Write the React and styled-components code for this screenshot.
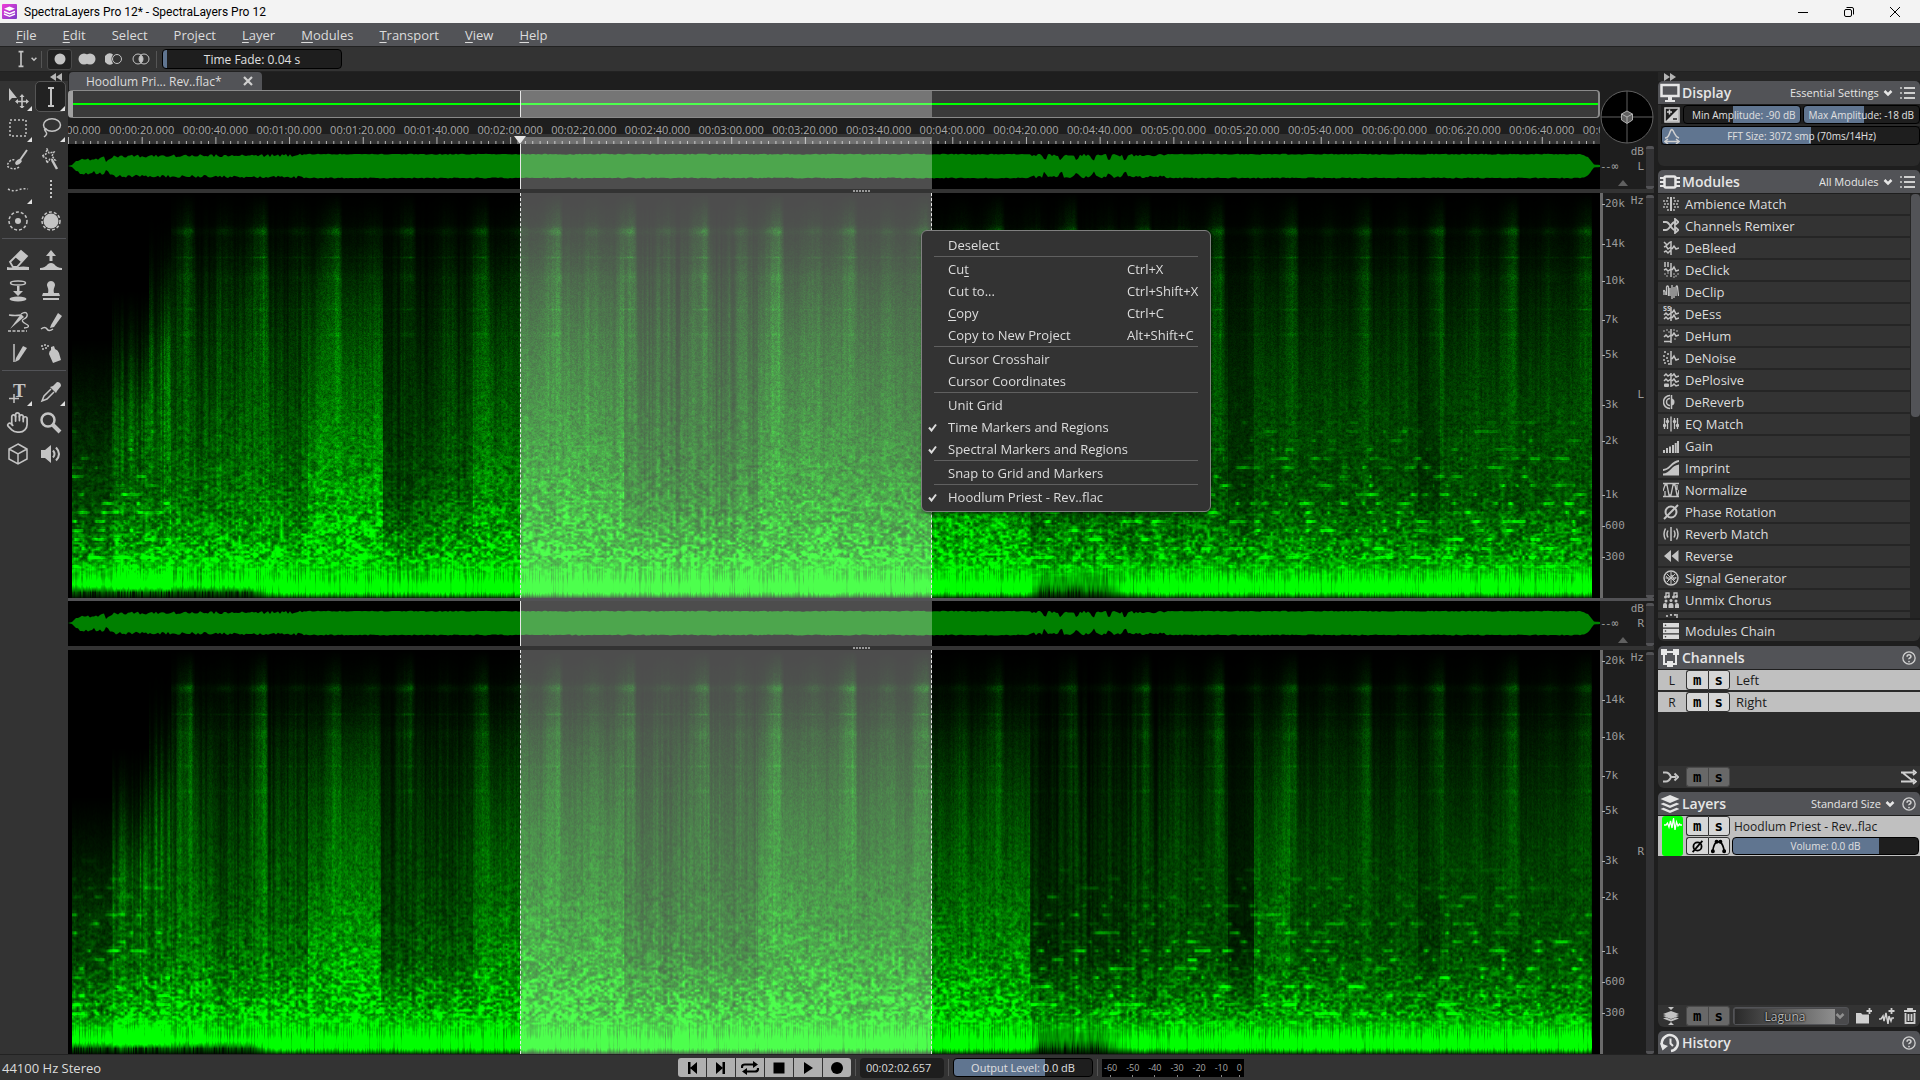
import React, { useLayoutEffect, useRef } from 'react';
import styled, { createGlobalStyle, css } from 'styled-components';
import { Hand } from 'lucide-react';

const UI_FONT = '"Open Sans", "Noto Sans", sans-serif';
const MONO_FONT = '"DejaVu Sans Mono", "Liberation Mono", monospace';

const GlobalStyle = createGlobalStyle`
  *, *::before, *::after { box-sizing: border-box; }
  body {
    margin: 0;
    background: #1e1e1e;
    color: #dcdcdc;
    font-family: ${UI_FONT};
    font-size: 13px;
    overflow: hidden;
  }
  button, input, select { font: inherit; color: inherit; }
  svg { display: block; flex: none; }
`;

/* ---------- data ---------- */

const menuList = [
  ['', 'F', 'ile'], ['', 'E', 'dit'], ['Select', '', ''], ['Pro', 'j', 'ect'], ['', 'L', 'ayer'],
  ['', 'M', 'odules'], ['', 'T', 'ransport'], ['', 'V', 'iew'], ['', 'H', 'elp'],
];

const contextGroups = [
  [{ label: 'Deselect' }],
  [
    { label: <>Cu<u>t</u></>, keys: 'Ctrl+X' },
    { label: 'Cut to...', keys: 'Ctrl+Shift+X' },
    { label: <><u>C</u>opy</>, keys: 'Ctrl+C' },
    { label: 'Copy to New Project', keys: 'Alt+Shift+C' },
  ],
  [{ label: 'Cursor Crosshair' }, { label: 'Cursor Coordinates' }],
  [
    { label: 'Unit Grid' },
    { label: 'Time Markers and Regions', checked: true },
    { label: 'Spectral Markers and Regions', checked: true },
  ],
  [{ label: 'Snap to Grid and Markers' }],
  [{ label: 'Hoodlum Priest - Rev..flac', checked: true }],
];

// span = share of the axis height down to the next mark
const freqMarks = [
  { label: '20k', span: 40 }, { label: '14k', span: 37 }, { label: '10k', span: 39 },
  { label: '7k', span: 35 }, { label: '5k', span: 50 }, { label: '3k', span: 36 },
  { label: '2k', span: 54 }, { label: '1k', span: 31 }, { label: '600', span: 31 },
  { label: '300', span: 49 },
];

const VISIBLE_STEPS = 20.79;
const SELECTION = { left: 29.5, width: 26.9 };

const timeMarks = Array.from({ length: 22 }, (_, i) => {
  const s = i * 20;
  const pad = (n) => String(n).padStart(2, '0');
  return `00:${pad(Math.floor(s / 60))}:${pad(s % 60)}.000`;
});

const meterMarks = ['-60', '-50', '-40', '-30', '-20', '-10', '0'];

/* ---------- icons ---------- */

const Svg = ({ size = 16, box = 16, h, children, ...rest }) => (
  <svg width={size} height={h || size} viewBox={`0 0 ${box} ${h ? (box * h) / size : box}`} fill="none"
    stroke="currentColor" strokeWidth="1.5" aria-hidden="true" {...rest}>
    {children}
  </svg>
);
const F = { fill: 'currentColor', stroke: 'none' };

const dots = (list, r = 0.8) => list.map(([x, y]) => <circle key={`${x}-${y}`} cx={x} cy={y} r={r} {...F} />);

const moduleList = [
  ['Ambience Match', <><path d="M8 1v14" strokeWidth="2" />{dots([[5, 2], [4, 5], [1, 5], [5, 8], [2, 8], [1, 11], [4, 11], [5, 14], [11, 2], [12, 5], [15, 5], [11, 8], [14, 8], [15, 11], [12, 11], [11, 14]], 0.9)}</>],
  ['Channels Remixer', <path d="M0 4h3c4 0 5 8 9 8h1M0 12h3c4 0 5-8 9-8h1M12 1l3.5 3L12 7zM12 9l3.500 3L12 15z" strokeWidth="1.8" />],
  ['DeBleed', <path d="M8 1v14M1 2l3 3 3-3M1 7l2-1 2 3 3-2M1 12l2-1 2 2 3-3M9 9l2-3 2 3 3-1" />],
  ['DeClick', <><path d="M2 0v5M5 0v5M8 1v14M1 8l2-1 2 2 3-2M9 8l2-3 2 4 3-1" />{dots([[2, 12], [5, 11], [4, 14], [11, 12], [13, 14], [15, 12], [11, 15]])}</>],
  ['DeClip', <path d="M0 11V8q1-3 2 0v3M3.500 11V3q1-2 2 0v9M7 12V4M9 1v14M11 3v11M13 12V3q1-2 1.500 0L15.500 12" strokeWidth="1.300" />],
  ['DeEss', <><text x="0" y="5" fontSize="8" fontWeight="700" {...F}>ss</text><path d="M8 1v14M1 9l2-2 2 2 3-2M1 13l2-2 2 2 3-2M9 7l2-3 2 4 3-1M9 12l2-3 2 4 3-1" /></>],
  ['DeHum', <><path d="M8 1v14M1 9l2-2 2 2 3-2M1 13.500h7M9 8l2-3 2 3 3-1" />{dots([[1, 3], [4, 2], [6, 4], [11, 2], [14, 3], [12, 11]])}</>],
  ['DeNoise', <><path d="M8 1v14M9 9l2-3 2 4 3-1" />{dots([[2, 2], [5, 4], [1, 6], [4, 8], [1, 10], [5, 11], [2, 13], [6, 14]], 1)}</>],
  ['DePlosive', <><path d="M8 1v14M1 4l2-2 2 2 3-2M1 9l2-2 2 2 3-2M9 4l2-2 2 3 3-1M9 9l2-2 2 3 3-1M9 14l2-2 2 2 3-1" /><rect x="1" y="11.500" width="5" height="3.500" rx="1" {...F} /></>],
  ['DeReverb', <><path d="M7 1.500a6.500 6.500 0 0 0 0 13M7 4.500a3.500 3.500 0 0 0 0 7M8.500 1v14" /><path d="M8 4.500a3.500 3.500 0 0 1 0 7z" {...F} /></>],
  ['EQ Match', <><path d="M8 0.500v15M1.500 2v11M4.500 2v11M11.500 2v11M14.500 2v11" strokeWidth="1.300" />{dots([[1.500, 9.500], [4.500, 5.500], [11.500, 5.500], [14.500, 9.500]], 1.700)}</>],
  ['Gain', <path d="M0 12h2v3h-2zM3 10h2v5h-2zM6 8.500h2v6.500h-2zM9 7h2v8h-2zM11.700 5h2v10h-2zM14 3h2v12h-2z" {...F} />],
  ['Imprint', <><path d="M0 15.500v-2c7 0 8-8 16-9v11z" {...F} /><path d="M0 10c7 0 8-8 16-9" strokeWidth="1.800" /></>],
  ['Normalize', <path d="M0 1.500h16M0 14.500h16M0 9l2-6h2l2 10h2l2-10h2l2 10h1l1-5M2 9v5M14 3v5" strokeWidth="1.300" />],
  ['Phase Rotation', <><circle cx="8" cy="8" r="5.500" strokeWidth="2" /><path d="M1 15L15 1" strokeWidth="2" /></>],
  ['Reverb Match', <path d="M8 1v14M5 4.500q-2 3.500 0 7M2.500 2.500q-3 5.500 0 11M11 4.500q2 3.500 0 7M13.500 2.500q3 5.500 0 11" />],
  ['Reverse', <path d="M8 2v12L1 8zM15.500 2v12L8.500 8z" {...F} />],
  ['Signal Generator', <><circle cx="8" cy="8" r="7" /><path d="M8 2v12M2.500 8h11M4 4l8 8M12 4l-8 8" strokeWidth="1" /><path d="M3 6l3 4 3-5 2 5 2-3" strokeWidth="1" /></>],
  ['Unmix Chorus', <><path d="M3 5V1h3v3M11 5V1h3v3" strokeWidth="1.300" /><path d="M0 16v-3q0-2 2-2t2 2v3zM5.500 16v-3q0-2 2.500-2t2.500 2v3zM12 16v-3q0-2 2-2t2 2v3z" {...F} />{dots([[2.500, 5], [5.500, 4.500], [10.500, 5], [13.500, 4.500], [3, 9], [8, 8.500], [13, 9]], 1.500)}</>],
  ['Unmix Components', <>{dots([[4, 2], [8, 1], [12, 1]], 1.100)}<path d="M14 0v14" /></>],
];

const Chevron = () => <Svg size={10} box={10} strokeWidth="2.500"><path d="M1.500 3L5 6.500 8.500 3" /></Svg>;
const ListIcon = () => (
  <Svg size={16} strokeWidth="2"><path d="M4 3h11M4 8h11M4 13h11" />{dots([[1, 3], [1, 8], [1, 13]], 1)}</Svg>
);
const HelpIcon = () => (
  <Svg size={14}><circle cx="8" cy="8" r="7" /><path d="M5.800 6.500q0-2.200 2.200-2.200t2.200 2q0 1-1.200 1.700t-1 1.500" strokeWidth="1.800" /><circle cx="8" cy="12" r="1" {...F} /></Svg>
);
const PhaseIcon = () => <Svg size={13} strokeWidth="2.200"><circle cx="8" cy="8" r="5" /><path d="M2 15L14 1" /></Svg>;
const NodesIcon = () => (
  <Svg size={15} strokeWidth="1.800"><path d="M2 12C3 5 5 4 6 3h4c2 2 3 4 4 9" />{dots([[2, 13], [6, 3], [10, 3], [14, 13]], 2.100)}</Svg>
);

const headIcons = {
  display: <><path d="M1.500 2h17v11h-17z" strokeWidth="2.500" /><path d="M8 14h4v3h3v2H5v-2h3z" {...F} /></>,
  modules: <><rect x="4.500" y="4.500" width="11" height="11" rx="1.500" strokeWidth="2.500" /><path d="M0 6h4M0 10h4M0 14h4M16 6h4M16 10h4M16 14h4" strokeWidth="2" /></>,
  channels: <><path d="M4 4h12M4 4v12h12V4" strokeWidth="2" /><path d="M1 1h6v6H1zM13 1h6v6h-6zM7 13h6v6H7z" {...F} /></>,
  layers: <path d="M10 1l9.500 4L10 9 0.500 5zM0.500 10l3-1.300L10 11.500l6.500-2.800 3 1.300L10 14zM0.500 15l3-1.300L10 16.500l6.500-2.800 3 1.300L10 19z" {...F} />,
  history: <><path d="M3.500 15A8 8 0 1 1 11 18" strokeWidth="2.500" /><path d="M0 10l2.500 7.500L8 13z" {...F} /><path d="M10.500 5.500v5l2.500 2.500" strokeWidth="2" /></>,
};

const ibeam = <path d="M8 2h6M8 20h6M11 2v18" strokeWidth="2" />;

const toolGroups = [
  [
    { name: 'Move', more: true, art: <><path d="M2 2v13l3-3h5z" {...F} /><path d="M15 10v11M9.500 15.500h11" strokeWidth="1.600" /><path d="M15 8l2.500 3h-5zM15 23l2.500-3h-5zM8 15.500l3-2.500v5zM22 15.500l-3-2.500v5z" {...F} /></> },
    { name: 'Time Selection', more: true, active: true, art: ibeam },
    { name: 'Rectangular Selection', more: true, art: <path d="M3 3h16v16H3z" strokeDasharray="2 2" /> },
    { name: 'Lasso', more: true, art: <><ellipse cx="12" cy="8" rx="8.500" ry="6.200" /><path d="M6 12q-2 1 0 3t-2 5M4 13l3-1" /></> },
    { name: 'Brush Selection', art: <><path d="M13 12L20 2" strokeWidth="2" /><path d="M8 15q2-4 5-4l2 2q-2 4-6 4z" {...F} /><path d="M12 19q-4 3-9 1t0-7q2-2 5-1" strokeDasharray="2 1.500" /></> },
    { name: 'Magic Wand', art: <><path d="M7 1l2 4 5-1-2 4 3 4-5-1-3 4-1-5-4-2 4-2z" strokeDasharray="2 1" /><path d="M12 12l5 9" strokeWidth="2.500" /></> },
    { name: 'Harmonics', more: true, art: <path d="M1 10q5 3 10 1t10-1" strokeDasharray="2 2" /> },
    { name: 'Frequency', art: <path d="M11 1v20" strokeWidth="2" strokeDasharray="2 2" /> },
    { name: 'Area', art: <><circle cx="11" cy="11" r="9" strokeDasharray="3 2" /><circle cx="11" cy="11" r="3" {...F} /></> },
    { name: 'Blob', art: <><circle cx="11" cy="11" r="9" strokeDasharray="3 2" /><circle cx="11" cy="11" r="7.500" {...F} /></> },
  ],
  [
    { name: 'Eraser', art: <><path d="M3 13L14 2l6 5-10 11H6z" strokeWidth="1.800" /><path d="M8 8l6-6 6 5-6 6z" {...F} /><path d="M0 18q6 1 11 0t11 0v3H0z" {...F} /></> },
    { name: 'Amplify', art: <><path d="M11 1l5 6h-3.500v5h-3V7H6zM0 21v-2q5 0 8-4 3-2 6 0 3 4 8 4v2z" {...F} /></> },
    { name: 'Attenuate', art: <><ellipse cx="11" cy="3" rx="7.500" ry="2" /><path d="M10 6h2.500v5H16l-5 5-5-5h4z" {...F} /><ellipse cx="11" cy="19" rx="8.500" ry="2.500" {...F} /></> },
    { name: 'Clone Stamp', art: <path d="M11 1a4 4 0 0 1 3.500 6c-1 2-1 4-.5 6h5l1 3H2l1-3h5c.5-2 .5-4-.5-6A4 4 0 0 1 11 1zM3 18h16v2H3z" {...F} /> },
    { name: 'Heal', art: <><path d="M2 4q6 1 12 0" strokeWidth="1.500" /><path d="M3 18L14 3l3 3z" {...F} /><path d="M14 3q5-3 6 0t-3 5 2 5-2 4" strokeWidth="1.300" /><path d="M1 20h19" strokeDasharray="3 1.500" /></> },
    { name: 'Draw', art: <><path d="M11 14l7-12 4 3-8 11-4 1z" {...F} /><path d="M1 18q4-3 6 0t6 0" /></> },
    { name: 'Pencil', art: <><path d="M7 2v18" /><path d="M9 16l7-12 4 2-8 12-4 2z" {...F} /></> },
    { name: 'Spray', art: <><path d="M11 5l3-1 1 3q3 1 4 4l2 7-8 3-4-9q0-3 2-4z" {...F} />{dots([[2, 4], [5, 3], [8, 4], [3, 7], [6, 6]], 1)}</> },
  ],
  [
    { name: 'Text', more: true, art: <><text x="6" y="16" fontSize="19" fontWeight="700" fontFamily='"Liberation Serif", serif' {...F}>T</text><path d="M7 13v9M2 17.500h10" /></> },
    { name: 'Color Picker', more: true, art: <><path d="M13 5l4-4q4 0 4 4l-4 5-1 2-6-6z" {...F} /><path d="M11 8L4 15l-2 5 5-2 7-7" strokeWidth="1.500" /></> },
    { name: 'Pan', art: null },
    { name: 'Zoom', art: <><circle cx="8" cy="8" r="6.500" strokeWidth="2.500" /><path d="M13 13l7 7" strokeWidth="4" /></> },
    { name: '3D View', art: <path d="M11 1l9 5v10l-9 5-9-5V6zM2 6l9 5 9-5M11 11v10" /> },
    { name: 'Playback', art: <><path d="M1 7h4l6-5v18l-6-5H1z" {...F} /><path d="M13 7.500q3 3.500 0 7M16 4.500q6 6.500 0 13" strokeWidth="2" /></> },
  ],
];

/* ---------- spectrogram / waveform drawing ---------- */

const mulberry = (seed) => () => {
  seed = (seed + 0x6d2b79f5) | 0;
  let t = Math.imul(seed ^ (seed >>> 15), 1 | seed);
  t = (t + Math.imul(t ^ (t >>> 7), 61 | t)) ^ t;
  return ((t ^ (t >>> 14)) >>> 0) / 4294967296;
};

const clamp = (n) => Math.max(0, Math.min(1, n));

const lerpTable = (table, x) => {
  for (let i = 1; i < table.length; i += 1) {
    if (x <= table[i][0]) {
      const [x0, y0] = table[i - 1];
      const [x1, y1] = table[i];
      return y0 + ((y1 - y0) * (x - x0)) / (x1 - x0 || 1);
    }
  }
  return table[table.length - 1][1];
};

const stepTable = (table, x) => {
  let out = table[0][1];
  table.forEach(([from, level]) => { if (x >= from) out = level; });
  return out;
};

const smoothNoise = (rand) => {
  const size = 512;
  const cells = Float32Array.from({ length: size * size }, () => rand());
  return (x, y) => {
    const xi = Math.floor(x);
    const yi = Math.floor(y);
    const fx = x - xi;
    const fy = y - yi;
    const at = (a, b) => cells[(b & 511) * size + (a & 511)];
    const top = at(xi, yi) + (at(xi + 1, yi) - at(xi, yi)) * fx;
    const low = at(xi, yi + 1) + (at(xi + 1, yi + 1) - at(xi, yi + 1)) * fx;
    return top + (low - top) * fy;
  };
};

const profile = [
  [0, 0], [0.03, 0.005], [0.08, 0.025], [0.16, 0.09], [0.25, 0.18], [0.4, 0.28], [0.55, 0.35],
  [0.68, 0.42], [0.78, 0.49], [0.86, 0.6], [0.92, 0.74], [0.95, 0.88], [0.965, 1.15], [0.982, 1.15], [0.992, 0.6], [1, 0.1],
];
const levels = {
  L: [[0, 0], [4, 0.6], [44, 0.75], [81, 0.8], [102, 0.85], [240, 1.25], [315, 0.55], [345, 0.7], [405, 1.05], [452, 1.2], [556, 0.8], [690, 1.15], [752, 1.05], [882, 1.05], [962, 0.65], [1020, 0.75], [1100, 0.8], [1160, 0.5], [1186, 0.75], [1350, 0.5], [1372, 0.8], [1524, 0]],
  R: [[0, 0], [4, 0.6], [44, 0.75], [81, 0.8], [102, 0.85], [240, 1.2], [313, 0.55], [345, 0.7], [405, 1.05], [452, 1.2], [556, 0.8], [690, 1.15], [752, 1.05], [882, 1.05], [962, 0.5], [1010, 0.5], [1060, 0.7], [1160, 0.3], [1186, 1], [1222, 0.75], [1350, 0.55], [1372, 0.75], [1524, 0]],
};
// how far down the sound reaches before it becomes audible, as a share of the height
const ceilings = [[0, 0.36], [44, 0.24], [81, 0.04], [102, 0]];
const partials = [[38, 0.15, 4], [64, 0.13, 1], [84, 0.06, 5], [116, 0.1, 1], [141, 0.07, 2]];

const drawSpectrogram = (canvas, channel) => {
  const w = canvas.clientWidth;
  const h = canvas.clientHeight;
  canvas.width = w;
  canvas.height = h;
  const ctx = canvas.getContext('2d');
  const img = ctx.createImageData(w, h);
  const rand = mulberry(channel === 'L' ? 11 : 12);
  const noise = smoothNoise(rand);

  for (let x = 0; x < w; x += 1) {
    const t = (x / w) * 1532;
    const level = stepTable(levels[channel], t);
    const ceiling = stepTable(ceilings, t);
    const phase = (t - 127 + 736) / 73.6;
    const beat = phase % 1;
    const strength = 0.75 + 0.5 * noise(Math.floor(phase) * 3.100, 410);
    const peak = beat > 0.94 ? (1 - beat) / 0.06 : Math.exp(-Math.pow((beat - 0.94) * 6, 2));
    const offbeat = Math.exp(-Math.pow((beat - 0.4) * 9, 2));
    const glow = strength * (peak + 0.3 * offbeat);
    const striped = (t > 100 && t < 240) || (t > 320 && t < 400) || (t > 556 && t < 690) || (t > 962 && t < 1120);
    const ripple = noise(t / 1.6, 300) - 0.5;
    const swell = noise(t / 7, 320) - 0.5;
    const column = 1 + ripple * (striped ? 1.1 : 0.5) + swell * (striped ? 0.6 : 0.3);
    const bars = channel === 'R' && t > 962 && t < 1090 ? 0.35 + 0.7 * Math.abs(Math.sin(t / 2.600)) : 1;
    const fine = rand();
    const weakBass = clamp((205 - t) / 25) + clamp((t - 960) / 12) * clamp((1070 - t) / 40);

    for (let y = 0; y < h; y += 1) {
      const v = y / h;
      const base = lerpTable(profile, v);
      const lowMix = clamp((v - 0.74) / 0.2);
      const lev = level === 0 ? 0 : level + (1 - level) * lowMix;
      const colMix = clamp(1.1 - v * 0.95);
      let g = base * lev * (1 + (column * bars - 1) * colMix);

      if (t > 102 && level) {
        // drum hits light up the treble
        const reach = clamp((0.75 - v) / 0.55);
        g = g * (1 + (0.3 * glow - 0.2) * reach) + glow * 0.13 * clamp(v * 9) * reach * (0.7 + column * 0.3);
        partials.forEach(([py, amount, spread]) => {
          const d = Math.abs(y - py);
          if (d <= spread * 2) g += amount * Math.exp(-(d * d) / (spread * spread)) * (0.15 + glow);
        });
      } else {
        g *= clamp((v - ceiling) * 3);
        if (t > 44) g *= 1 + 0.25 * clamp((v - 0.3) / 0.2) + ripple * clamp((0.9 - v) * 2);
      }

      const grain = rand();
      const cells = noise(x / 1.5, y / 1.4 + 40);
      const blobs = noise(x / 3, y / 2.200 + 200);
      const k = clamp((v - 0.35) / 0.5);
      const bass = clamp((v - 0.9) / 0.05);
      const treble = 0.65 + grain * 0.4 + cells * 0.3;
      const mid = 0.4 + grain * 0.25 + cells * 0.5 + blobs * 0.5;
      const low = 0.38 + grain * 0.1 + Math.pow(blobs, 1.500) * 1.300 + cells * 0.35;
      const texture = k < 0.5 ? treble + (mid - treble) * k * 2 : mid + (low - mid) * (k * 2 - 1);
      const streaks = 0.6 + fine * 0.5 + noise(x / 1.5, y / 9) * 0.35;
      g *= texture + (streaks - texture) * bass;

      // sustained notes show as short dashes on a few lines
      const noteArea = clamp((v - 0.5) / 0.25) * clamp((0.95 - v) / 0.04);
      if (noteArea && level && (t > 962 || t < 102)) {
        g *= 1 - 0.22 * noteArea;
        const line = Math.abs((y % 9) - 4) < 2 ? 1 : 0.15;
        const note = noise(x / 7, Math.floor(y / 9) * 7 + 90);
        if (note > 0.62) g += (note - 0.62) * 1.700 * noteArea * line;
      }
      if (v > 0.92) {
        const fade = t < 400 ? clamp((v - 0.965) / 0.02) : clamp((v - 0.925) / 0.06);
        g *= 1 - clamp(weakBass) * fade * (0.5 + 0.45 * fine);
      }

      const i = (y * w + x) * 4;
      img.data[i] = 0;
      img.data[i + 1] = Math.max(0, Math.min(255, g * 265));
      img.data[i + 2] = 0;
      img.data[i + 3] = 255;
    }
  }
  ctx.putImageData(img, 0, 0);
};

const envelope = [[0, 0], [4, 1], [10, 7], [16, 9], [24, 7], [36, 10], [38, 6], [46, 11], [150, 11.5], [240, 12], [1515, 12], [1520, 9], [1526, 1.5], [1532, 1]];
const wavePath = (() => {
  const rand = mulberry(5);
  const up = [];
  const down = [];
  for (let x = 0; x <= 1532; x += 2) {
    const e = lerpTable(envelope, x);
    const rough = x < 235 || (x > 958 && x < 1100) ? 3 : 1;
    const dip = (x > 962 && x < 1060 && x % 16 < 4) ? 4 : 0;
    const k = e > 5 ? 1 : 0;
    up.push(`${x} ${(22 - e + k * (rand() * rough - 0.3 + dip)).toFixed(1)}`);
    down.push(`${x} ${(22 + e - k * (rand() * rough - 0.5 + dip)).toFixed(1)}`);
  }
  return `M${up.join('L')}L${down.reverse().join('L')}Z`;
})();

/* ---------- small shared parts ---------- */

const Slider = ({ label, value, from = 0, text, shift, ...rest }) => (
  <SliderBox {...rest}>
    <SliderInput type="range" min="0" max="100" defaultValue={value} aria-label={label} $from={from} $to={value} />
    <SliderText $shift={shift}>{text}</SliderText>
  </SliderBox>
);

const MuteSolo = ({ dim }) => (
  <ButtonPair>
    <MiniButton $dim={dim} aria-label="Mute">m</MiniButton>
    <MiniButton $dim={dim} aria-label="Solo">s</MiniButton>
  </ButtonPair>
);

const PanelHeader = ({ icon, title, select, end, last }) => (
  <Header $last={last}>
    <Svg size={20} box={20}>{headIcons[icon]}</Svg>
    <h2>{title}</h2>
    {select && (
      <HeaderSelect>
        <select aria-label={`${title} view`} defaultValue={select}><option>{select}</option></select>
        <Chevron />
      </HeaderSelect>
    )}
    <IconButton aria-label={`${title} options`}>{end === 'list' ? <ListIcon /> : <HelpIcon />}</IconButton>
  </Header>
);

const Track = ({ channel }) => {
  const canvasRef = useRef(null);

  useLayoutEffect(() => {
    drawSpectrogram(canvasRef.current, channel);
  }, [channel]);

  return (
    <>
      <WaveRow>
        <Lane>
          <svg width="100%" height="45" viewBox="0 0 1532 45" preserveAspectRatio="none">
            <path d={wavePath} fill="#008000" />
          </svg>
          <SelectionOverlay $solid />
        </Lane>
        <Scale>
          <DbScale>
            <span>dB</span>
            <div><b>-</b><em>-∞</em><span>{channel}</span></div>
            <Svg size={10} box={10} h={6}><path d="M5 0l5 6H0z" fill="#606060" stroke="none" /></Svg>
          </DbScale>
          <ScrollBar />
        </Scale>
      </WaveRow>
      <Splitter><i /><i /><i /><i /><i /><i /></Splitter>
      <SpectrumRow>
        <Lane>
          <canvas ref={canvasRef} role="img" aria-label={`${channel} spectrogram`} />
          <SelectionOverlay />
        </Lane>
        <Scale>
          <FreqAxis>
            {freqMarks.map((m) => (
              <FreqMark key={m.label} $span={m.span}>{m.label}</FreqMark>
            ))}
          </FreqAxis>
          <UnitColumn><span>Hz</span><span>{channel}</span></UnitColumn>
          <ScrollBar />
        </Scale>
      </SpectrumRow>
    </>
  );
};

const ContextMenu = () => (
  <MenuBox role="menu">
    {contextGroups.map((group, g) => (
      <MenuGroup key={g}>
        {group.map((item, i) => (
          <MenuItem key={i} role="menuitem">
            {item.checked ? <Svg size={9} box={9} strokeWidth="2"><path d="M1 4.500l2.500 3L8 1.500" /></Svg> : <span />}
            <span>{item.label}</span>
            <span>{item.keys}</span>
          </MenuItem>
        ))}
      </MenuGroup>
    ))}
  </MenuBox>
);

/* ---------- app ---------- */

const App = () => (
  <Window>
    <GlobalStyle />
    <TitleBar>
      <svg width="15" height="15" viewBox="0 0 15 15" aria-hidden="true">
        <defs>
          <linearGradient id="logo" x1="0" y1="0" x2="1" y2="1">
            <stop offset="0" stopColor="#f03cd8" /><stop offset="1" stopColor="#7a3cc8" />
          </linearGradient>
        </defs>
        <rect width="15" height="15" rx="1" fill="url(#logo)" />
        <path d="M7.500 2.500l5.500 2.200-5.500 2.300L2 4.700z" fill="#fff" />
        <path d="M2 7.500l5.500 2.200L13 7.500M2 10l5.500 2.300L13 10" stroke="#fff" strokeWidth="1.400" fill="none" />
      </svg>
      <h1>SpectraLayers Pro 12* - SpectraLayers Pro 12</h1>
      <WindowButton aria-label="Minimize"><Svg size={10} box={10} strokeWidth="1"><path d="M0 5.500h10" /></Svg></WindowButton>
      <WindowButton aria-label="Restore"><Svg size={10} box={10} strokeWidth="1"><rect x="0.500" y="2.500" width="7" height="7" rx="1.500" /><path d="M2.500 0.500H8q1.500 0 1.500 1.500v5.500" /></Svg></WindowButton>
      <WindowButton aria-label="Close"><Svg size={10} box={10} strokeWidth="1"><path d="M0 0l10 10M10 0L0 10" /></Svg></WindowButton>
    </TitleBar>

    <MenuBar>
      {menuList.map(([pre, key, post]) => (
        <button key={pre + key + post}>{pre}{key && <u>{key}</u>}{post}</button>
      ))}
    </MenuBar>

    <ToolOptions>
      <CurrentTool aria-label="Time Selection">
        <Svg size={18} box={22}>{ibeam}</Svg>
        <Svg size={6} box={10} strokeWidth="2.500"><path d="M1 3l4 4 4-4" /></Svg>
      </CurrentTool>
      <Divider />
      <ModeButton $active aria-label="Replace"><Svg size={18} h={12} box={18}><circle cx="9" cy="6" r="5.500" {...F} /></Svg></ModeButton>
      <ModeButton aria-label="Add"><Svg size={18} h={12} box={18}><circle cx="6" cy="6" r="5.500" {...F} /><circle cx="12" cy="6" r="5.500" {...F} /></Svg></ModeButton>
      <ModeButton aria-label="Subtract"><Svg size={18} h={12} box={18} strokeWidth="1"><path d="M8 1.500a5.500 5.500 0 1 0 0 9q-3-4.500 0-9z" {...F} /><circle cx="12" cy="6" r="4.500" /></Svg></ModeButton>
      <ModeButton aria-label="Intersect"><Svg size={18} h={12} box={18} strokeWidth="1"><circle cx="6" cy="6" r="5" /><circle cx="12" cy="6" r="5" /><path d="M9 2q4 4 0 8-4-4 0-8z" {...F} /></Svg></ModeButton>
      <Divider />
      <Slider label="Time Fade" value={2} text="Time Fade: 0.04 s" $width={180} $height={20} />
    </ToolOptions>

    <Body>
      <ToolPanel aria-label="Tools">
        <Collapse><Svg size={12} h={8} box={12}><path d="M6 0v8L0 4zM12 0v8L6 4z" {...F} /></Svg></Collapse>
        {toolGroups.map((group, i) => (
          <ToolGroup key={i}>
            {group.map((tool) => (
              <ToolButton key={tool.name} $active={tool.active} $more={tool.more} aria-label={tool.name}>
                {tool.art ? <Svg size={22} box={22}>{tool.art}</Svg> : <Hand size={23} strokeWidth={1.8} />}
              </ToolButton>
            ))}
          </ToolGroup>
        ))}
      </ToolPanel>

      <Editor>
        <TabBar>
          <Tab>
            <span>Hoodlum Pri... Rev..flac*</span>
            <IconButton aria-label="Close tab"><Svg size={10} box={10} strokeWidth="2.200"><path d="M1 1l8 8M9 1L1 9" /></Svg></IconButton>
          </Tab>
        </TabBar>
        <TimeHead>
          <TimeColumn>
            <Overview><i /><SelectionOverlay /></Overview>
            <Ruler>
              {timeMarks.map((m) => <span key={m}>{m}</span>)}
            </Ruler>
            <Ticks>
              <svg width="100%" height="10">
                {Array.from({ length: 208 }, (_, i) => (
                  <rect key={i} x={`${(i * 10) / VISIBLE_STEPS}%`} y={i % 10 ? 7 : 3} width="1" height="8" fill="#b4b4b4" />
                ))}
              </svg>
              <SelectionOverlay />
              <Playhead><Svg size={12} h={8} box={12}><path d="M0 0h12L6 8z" {...F} /></Svg></Playhead>
            </Ticks>
          </TimeColumn>
          <Svg size={54} strokeWidth="1" box={54} color="#606060">
            <circle cx="27" cy="27" r="26" fill="#000" /><path d="M27 1v52M1 27h52" />
            <path d="M27 21l5.500 3v6L27 33.500 21.500 30v-6z" fill="#606060" stroke="#b0b0b0" /><path d="M21.500 24l5.500 3 5.500-3M27 27v6" stroke="#b0b0b0" />
          </Svg>
        </TimeHead>
        <Track channel="L" />
        <ChannelDivider />
        <Track channel="R" />
      </Editor>

      <SidePanel>
        <Collapse $right><Svg size={12} h={8} box={12}><path d="M0 0v8l6-4zM6 0v8l6-4z" {...F} /></Svg></Collapse>

        <Panel>
          <PanelHeader icon="display" title="Display" select="Essential Settings" end="list" />
          <DisplayBody>
            <DisplayRow>
              <SliderIcon><rect x="1" y="1" width="14" height="14" /><path d="M14.500 1.500v13h-13z" {...F} /><path d="M3 5h5M5.500 2.500v5" /><path d="M9 12h4" stroke="#222" /></SliderIcon>
              <Slider label="Min Amplitude" value={100} from={42} text="Min Amplitude: -90 dB" shift={4} $small $height={19} />
              <Slider label="Max Amplitude" value={52} text="Max Amplitude: -18 dB" $small $height={19} />
            </DisplayRow>
            <DisplayRow $single>
              <Slider label="FFT Size" value={58} text="FFT Size: 3072 smp (70ms/14Hz)" shift={22} $small $height={19} />
              <SliderIcon><path d="M1 10q3 0 4.500-4.500T8 1.500t2.500 4T15 10M1 13.500h14M4 11l-3 2.500L4 16M12 11l3 2.500-3 2.500" /></SliderIcon>
            </DisplayRow>
          </DisplayBody>
        </Panel>

        <Panel $grow={424} $fixed={48}>
          <PanelHeader icon="modules" title="Modules" select="All Modules" end="list" />
          <ModuleScroller>
            <ModuleList>
              {moduleList.map(([name, art]) => (
                <li key={name}><button><Svg>{art}</Svg>{name}</button></li>
              ))}
            </ModuleList>
            <ModuleThumb><i /></ModuleThumb>
          </ModuleScroller>
          <ChainButton>
            <Svg><path d="M0 0h16v4.500H0zM0 5.750h16v4.500H0zM0 11.500h16V16H0z" {...F} /><circle cx="2.500" cy="2.300" r="0.800" fill="#333" stroke="none" /><circle cx="2.500" cy="8" r="0.800" fill="#333" stroke="none" /><circle cx="2.500" cy="13.700" r="0.800" fill="#333" stroke="none" /></Svg>
            Modules Chain
          </ChainButton>
        </Panel>

        <Panel $grow={96} $fixed={46}>
          <PanelHeader icon="channels" title="Channels" />
          <PanelFill>
            {[['L', 'Left'], ['R', 'Right']].map(([short, name]) => (
              <ChannelRow key={short}><span>{short}</span><MuteSolo /><span>{name}</span></ChannelRow>
            ))}
          </PanelFill>
          <PanelFooter>
            <FooterIcon aria-label="Merge channels"><Svg strokeWidth="2"><path d="M0 3.500h3q3 0 5 4.500h5M0 12.500h3q3 0 5-4.500M11.500 4.500L15 8l-3.500 3.500" /></Svg></FooterIcon>
            <MuteSolo dim />
            <Spacer />
            <IconButton aria-label="Remap channels"><Svg strokeWidth="1.800"><path d="M0 3.500h13M0 12.500h13M2 4l10 8M12 1l3 2.500L12 6M12 10l3 2.500-3 2.500" /></Svg></IconButton>
          </PanelFooter>
        </Panel>

        <Panel $grow={189} $fixed={46}>
          <PanelHeader icon="layers" title="Layers" select="Standard Size" />
          <PanelFill>
            <LayerRow>
              <LayerSwatch><Svg size={18} h={14} box={18} strokeWidth="1.300"><path d="M0 8h2l1.500-2 1.500 4 1.500-6L8 11 9.500 1 11 13l1.500-8L14 9l1.500-2 1 1H18" /></Svg></LayerSwatch>
              <LayerButtons>
                <MuteSolo />
                <ButtonPair>
                  <MiniButton $short aria-label="Invert phase"><PhaseIcon /></MiniButton>
                  <MiniButton $short aria-label="Envelope"><NodesIcon /></MiniButton>
                </ButtonPair>
              </LayerButtons>
              <LayerInfo>
                <span>Hoodlum Priest - Rev..flac</span>
                <Slider label="Volume" value={79} text="Volume: 0.0 dB" $small $height={18} />
              </LayerInfo>
            </LayerRow>
          </PanelFill>
          <PanelFooter>
            <FooterIcon aria-label="Layer stack"><Svg size={18} box={18} strokeWidth="1"><path d="M6 0h6L9 3zM6 18h6l-3-3zM9 4l8 3-8 3-8-3zM1 9l3-1 5 2 5-2 3 1-8 3zM1 11.500l3-1 5 2 5-2 3 1-8 3z" {...F} /></Svg></FooterIcon>
            <MuteSolo dim />
            <ColorSelect>
              <select aria-label="Layer color" defaultValue="Laguna"><option>Laguna</option></select>
              <Chevron />
            </ColorSelect>
            <IconButton aria-label="New group"><Svg><path d="M0 5h5l1.500 1.500H13V15.500H0z" {...F} /><path d="M13.500 0v6M10.500 3h6" strokeWidth="1.800" /></Svg></IconButton>
            <IconButton aria-label="New layer"><Svg><path d="M0 11h2l2-3 1 5 2-8 2 11 1-8 2 5 1-3h2" /><path d="M12.500 0v6M9.500 3h6" strokeWidth="1.800" /></Svg></IconButton>
            <IconButton aria-label="Delete"><Svg strokeWidth="1.800"><path d="M2 3h12M6 3V1h4v2M3.500 5v10h9V5M6.500 6v7M9.500 6v7" /></Svg></IconButton>
          </PanelFooter>
        </Panel>

        <Panel>
          <PanelHeader icon="history" title="History" last />
        </Panel>
      </SidePanel>
    </Body>

    <StatusBar>
      <span>44100 Hz Stereo</span>
      <Transport>
        <TransportButtons>
          <button aria-label="Go to start"><Svg size={14} box={14}><path d="M3 1h2.500v12H3zM12 1v12L5 7z" {...F} /></Svg></button>
          <button aria-label="Go to end"><Svg size={14} box={14}><path d="M8.500 1H11v12H8.500zM2 1v12l7-6z" {...F} /></Svg></button>
          <button aria-label="Loop"><Svg size={18} h={14} box={18} strokeWidth="2.200"><path d="M1 7V6q0-2.500 3-2.500h9M17 7v1q0 2.500-3 2.500H5" /><path d="M12 0l5 3.500L12 7zM6 7l-5 3.500L6 14z" {...F} /></Svg></button>
          <button aria-label="Stop"><Svg size={14} box={14}><path d="M1.500 1.500h11v11h-11z" {...F} /></Svg></button>
          <button aria-label="Play"><Svg size={14} box={14}><path d="M3 1v12l9-6z" {...F} /></Svg></button>
          <button aria-label="Record"><Svg size={14} box={14}><circle cx="7" cy="7" r="6" {...F} /></Svg></button>
        </TransportButtons>
        <Divider />
        <TimeInput aria-label="Position" defaultValue="00:02:02.657" />
        <Divider />
        <Slider label="Output Level" value={66} text="Output Level: 0.0 dB" $medium $width={140} $height={19} />
        <Divider />
        <Meter>{meterMarks.map((m) => <span key={m}>{m}</span>)}</Meter>
      </Transport>
      <span />
    </StatusBar>

    <ContextMenu />
  </Window>
);

export default App;

/* ---------- styles ---------- */

const Window = styled.div`
  display: flex;
  flex-direction: column;
  height: 100vh;
`;

const plainButton = css`
  border: 0;
  padding: 0;
  margin: 0;
  background: none;
  display: flex;
  align-items: center;
  justify-content: center;
`;

const TitleBar = styled.header`
  display: flex;
  align-items: center;
  height: 23px;
  flex: none;
  padding: 0 2px;
  background: #f3f3f3;
  color: #000;

  h1 {
    flex: 1;
    margin: 0 0 0 7px;
    font-family: Roboto, ${UI_FONT};
    font-size: 12px;
    font-weight: 400;
    line-height: 22px;
  }
`;

const WindowButton = styled.button`
  ${plainButton}
  width: 46px;
  height: 20px;
`;

const MenuBar = styled.nav`
  display: flex;
  height: 24px;
  flex: none;
  padding-left: 3px;
  background: #525357;
  border-bottom: 1px solid #222;

  button {
    ${plainButton}
    padding: 0 13px;
    white-space: pre;
    gap: 0;
  }
  u { text-underline-offset: 2px; }
`;

const ToolOptions = styled.div`
  display: flex;
  align-items: center;
  height: 25px;
  flex: none;
  gap: 2px;
  padding: 0 0 0 10px;
  background: #333;
  border-bottom: 1px solid #222;
  color: #c4c4c4;
`;

const CurrentTool = styled.button`
  ${plainButton}
  gap: 1px;
  width: 28px;
`;

const Divider = styled.i`
  width: 1px;
  height: 17px;
  margin: 0 3px 0 1px;
  background: #555;
`;

const ModeButton = styled.button`
  ${plainButton}
  width: 25px;
  height: 21px;
  border: 1px solid ${(p) => (p.$active ? '#4a4a4a' : 'transparent')};
  border-radius: 3px;
  background: ${(p) => (p.$active ? '#222' : 'none')};
`;

const sliderFont = (p) => {
  if (p.$small) return 10;
  return p.$medium ? 11 : 12;
};

const SliderBox = styled.label`
  display: grid;
  align-items: center;
  width: ${(p) => (p.$width ? `${p.$width}px` : 'auto')};
  height: ${(p) => p.$height}px;
  font-size: ${sliderFont}px;
  min-width: 0;
`;

const SliderInput = styled.input`
  grid-area: 1 / 1;
  appearance: none;
  width: 100%;
  height: 100%;
  margin: 0;
  border: 1px solid #000;
  border-radius: 4px;
  background: linear-gradient(90deg,
    #1e1e1e ${(p) => p.$from}%, #607590 ${(p) => p.$from}%,
    #607590 ${(p) => p.$to}%, #1e1e1e ${(p) => p.$to}%);

  &::-webkit-slider-thumb { appearance: none; width: 1px; height: 1px; opacity: 0; }
`;

const SliderText = styled.span`
  grid-area: 1 / 1;
  padding-left: ${(p) => p.$shift || 0}px;
  text-align: center;
  white-space: nowrap;
  color: #e0e0e0;
  pointer-events: none;
  z-index: 1;
`;

const Body = styled.div`
  display: flex;
  flex: 1;
  min-height: 0;
`;

const ToolPanel = styled.aside`
  width: 68px;
  flex: none;
  background: #333;
`;

const Collapse = styled.div`
  display: flex;
  align-items: center;
  justify-content: ${(p) => (p.$right ? 'flex-start' : 'flex-end')};
  height: 9px;
  flex: none;
  padding: 0 6px;
  background: #252525;
  color: #b4b4b4;
`;

const ToolGroup = styled.div`
  display: grid;
  grid-template-columns: 31px 31px;
  column-gap: 2px;
  margin: 0 2px;
  padding-bottom: 2px;
  color: #c4c4c4;

  & + & {
    padding-top: 5px;
    border-top: 1px solid #525357;
  }
`;

const ToolButton = styled.button`
  ${plainButton}
  position: relative;
  height: 31px;
  border: 1px solid ${(p) => (p.$active ? '#555' : 'transparent')};
  border-radius: 5px;
  background: ${(p) => (p.$active ? '#222' : 'none')};

  &::after {
    content: '';
    display: ${(p) => (p.$more ? 'block' : 'none')};
    position: absolute;
    right: 0;
    bottom: 0;
    border-left: 5px solid transparent;
    border-bottom: 5px solid #e0e0e0;
  }
`;

const Editor = styled.main`
  display: flex;
  flex-direction: column;
  flex: 1;
  min-width: 0;
  background: #1e1e1e;
`;

const TabBar = styled.div`
  height: 18px;
  flex: none;
  display: flex;
  padding-left: 1px;
`;

const Tab = styled.div`
  display: flex;
  align-items: center;
  justify-content: space-between;
  width: 193px;
  padding: 0 9px 0 17px;
  border-radius: 4px 4px 0 0;
  background: #525357;
  font-size: 12px;
`;

const TimeHead = styled.div`
  display: flex;
  height: 54px;
  flex: none;
`;

const TimeColumn = styled.div`
  flex: 1;
  min-width: 0;
  overflow: hidden;
`;

const SelectionOverlay = styled.div`
  position: absolute;
  top: 0;
  bottom: 0;
  left: ${SELECTION.left}%;
  width: ${SELECTION.width}%;
  background: rgba(255, 255, 255, 0.3);
  border-left: 1px ${(p) => (p.$solid ? 'solid' : 'dashed')} #e6e6e6;
  border-right: 1px ${(p) => (p.$solid ? 'none' : 'dashed')} #e6e6e6;
`;

const Overview = styled.div`
  position: relative;
  display: flex;
  align-items: center;
  height: 28px;
  border: 1px solid #8a8a8a;
  border-left: 5px solid #a0a0a0;
  border-right-width: 2px;
  border-radius: 4px;
  background: #3a3a3a;

  i {
    flex: 1;
    height: 2px;
    background: #00ff00;
  }
  ${SelectionOverlay} {
    width: calc(${SELECTION.width}% + 2px);
    margin: 0 0 0 -3px;
    border-right: 0;
    border-left-style: solid;
  }
`;

const Ruler = styled.div`
  display: flex;
  height: 16px;
  margin-left: -${50 / VISIBLE_STEPS}%;
  padding-top: 4px;
  font-size: 11px;
  line-height: 16px;
  color: #a8a8a8;

  span {
    flex: 0 0 ${100 / (VISIBLE_STEPS + 0.5)}%;
    text-align: center;
  }
`;

const Ticks = styled.div`
  position: relative;
  height: 10px;
  background: #333;
  color: #e6e6e6;

  ${SelectionOverlay} { border: 0; top: 3px; }
`;

const Playhead = styled.div`
  position: absolute;
  left: ${SELECTION.left}%;
  top: 2px;
  margin-left: -6px;
`;

const WaveRow = styled.div`
  display: flex;
  height: 45px;
  flex: none;
`;

const SpectrumRow = styled.div`
  display: flex;
  flex: 1 1 0;
  min-height: 0;
`;

const Lane = styled.div`
  position: relative;
  flex: 1;
  min-width: 0;
  background: #000;

  canvas {
    display: block;
    width: 100%;
    height: 100%;
  }
`;

const Scale = styled.div`
  display: flex;
  width: 54px;
  flex: none;
  font-family: ${MONO_FONT};
  font-size: 11px;
  color: #9a9a9a;
`;

const ScrollBar = styled.div`
  width: 8px;
  margin-top: 2px;
  background: #323234;
  border: solid #525255;
  border-width: 3px 0;
  border-radius: 2px;
`;

const DbScale = styled.div`
  display: flex;
  flex-direction: column;
  flex: 1;
  padding-right: 2px;
  line-height: 15px;
  text-align: right;

  div { display: flex; }
  b { font-weight: 400; width: 5px; overflow: hidden; }
  em { flex: 1; text-align: left; font-style: normal; }
  svg { margin: 6px 0 0 18px; }
`;

const Splitter = styled.div`
  display: flex;
  align-items: center;
  justify-content: center;
  gap: 1px;
  height: 4px;
  flex: none;
  background: #333;

  i { width: 2px; height: 2px; background: #999; }
`;

const ChannelDivider = styled.div`
  height: 3px;
  flex: none;
  background: #525255;
`;

const FreqAxis = styled.div`
  display: flex;
  flex-direction: column;
  flex: 1;
  padding-top: 3px;
  border-left: 3px solid #6a6a6a;
`;

const FreqMark = styled.div`
  display: flex;
  align-items: flex-start;
  flex: ${(p) => p.$span} 1 0;
  min-height: 0;
  line-height: 16px;

  &::before {
    content: '';
    width: 3px;
    height: 1px;
    margin: 8px 0 0 -1px;
    background: #b0b0b0;
  }
`;

const UnitColumn = styled.div`
  display: flex;
  flex-direction: column;
  justify-content: space-between;
  align-items: flex-end;
  height: calc(50% + 8px);
  padding-right: 2px;
  line-height: 16px;
`;

const SidePanel = styled.aside`
  display: flex;
  flex-direction: column;
  gap: 4px;
  width: 266px;
  flex: none;
  padding-left: 4px;

  ${Collapse} { margin-bottom: -4px; }
`;

const Panel = styled.section`
  display: flex;
  flex-direction: column;
  flex: ${(p) => (p.$grow ? `${p.$grow} 1 ${p.$fixed}px` : 'none')};
  min-height: 0;
`;

const Header = styled.div`
  display: flex;
  align-items: center;
  gap: 2px;
  height: ${(p) => (p.$last ? 23 : 24)}px;
  flex: none;
  padding: 0 4px 0 2px;
  border-radius: 5px 5px 0 0;
  border-bottom: ${(p) => (p.$last ? 0 : 1)}px solid #1e1e1e;
  background: #525357;
  color: #e6e6e6;

  h2 {
    flex: 1;
    margin: 0;
    font-size: 14px;
    font-weight: 600;
    line-height: 22px;
  }
`;

const HeaderSelect = styled.span`
  display: flex;
  align-items: center;
  gap: 4px;
  margin-right: 5px;

  select {
    appearance: none;
    border: 0;
    padding: 0;
    background: none;
    font-size: 11px;
  }
`;

const IconButton = styled.button`
  ${plainButton}
  color: #d0d0d0;
`;

const DisplayBody = styled.div`
  display: flex;
  flex-direction: column;
  gap: 2px;
  height: 61px;
  padding-left: 3px;
  border-radius: 0 0 6px 6px;
  background: #2a2a2a;
`;

const DisplayRow = styled.div`
  display: grid;
  grid-template-columns: ${(p) => (p.$single ? '1fr' : '20px 1fr 1fr')};
  align-items: center;
  gap: 2px;
  height: 19px;
  background: #1e1e1e;

  /* the icon sits on the slider itself when the row holds only one */
  ${(p) => p.$single && css`
    > * { grid-area: 1 / 1; }
  `}
`;

const SliderIconSvg = styled.svg`
  margin-left: 3px;
  color: #d0d0d0;
  z-index: 1;
  pointer-events: none;
`;

const SliderIcon = ({ children }) => (
  <SliderIconSvg width="16" height="16" viewBox="0 0 16 16" fill="none" stroke="currentColor" strokeWidth="1.500" aria-hidden="true">
    {children}
  </SliderIconSvg>
);

const ModuleScroller = styled.div`
  display: flex;
  flex: 1;
  min-height: 0;
  overflow: hidden;
  background: #252525;
`;

const ModuleList = styled.ul`
  flex: 1;
  margin: 0;
  padding: 0;
  list-style: none;

  li { margin-bottom: 2px; }
  button {
    ${plainButton}
    justify-content: flex-start;
    gap: 6px;
    width: 100%;
    height: 20px;
    padding-left: 5px;
    background: #333;
  }
  svg { color: #c4c4c4; }
`;

const ModuleThumb = styled.div`
  width: 10px;
  padding: 0 0 0 1px;

  i {
    display: block;
    height: 223px;
    border-radius: 4px;
    background: #525357;
  }
`;

const ChainButton = styled.button`
  ${plainButton}
  justify-content: flex-start;
  gap: 6px;
  height: 21px;
  margin: 2px 0 1px;
  padding-left: 5px;
  border-radius: 0 0 6px 6px;
  background: #333;
`;

const PanelFill = styled.div`
  flex: 1;
  min-height: 0;
  background: #2a2a2a;
`;

const ChannelRow = styled.div`
  display: grid;
  grid-template-columns: 28px 44px 1fr;
  align-items: center;
  height: 20px;
  margin-bottom: 2px;
  background: #c0c0c0;
  color: #1a1a1a;

  > span:first-child { text-align: center; font-size: 12px; }
  > span:last-child { padding-left: 6px; }
`;

const ButtonPair = styled.div`
  display: flex;
  width: 44px;
  flex: none;
`;

const MiniButton = styled.button`
  ${plainButton}
  flex: 1;
  height: ${(p) => (p.$short ? 18 : 20)}px;
  border: 1px solid ${(p) => (p.$dim ? '#4a4a4a' : '#333')};
  background: ${(p) => (p.$dim ? '#686868' : '#d6d6d6')};
  color: #000;
  font-family: "DejaVu Sans Mono", monospace;
  font-size: 14px;
  font-weight: 700;
  line-height: 16px;

  &:first-child { border-radius: 3px 0 0 3px; border-right-width: 0; }
  &:last-child { border-radius: 0 3px 3px 0; }
`;

const PanelFooter = styled.div`
  display: flex;
  align-items: center;
  gap: 7px;
  height: 22px;
  flex: none;
  padding: 0 3px 0 4px;
  border-radius: 0 0 6px 6px;
  background: #333;
`;

const FooterIcon = styled.button`
  ${plainButton}
  width: 18px;
  margin-right: -1px;
  color: #c4c4c4;
`;

const Spacer = styled.span`
  flex: 1;
`;

const LayerRow = styled.div`
  display: flex;
  height: 40px;
  padding-left: 4px;
  background: #c0c0c0;
  color: #1a1a1a;
`;

const LayerSwatch = styled.div`
  display: flex;
  justify-content: center;
  width: 21px;
  margin-right: 3px;
  padding-top: 1px;
  border-radius: 3px;
  background: #00ff00;
  color: #fff;
`;

const LayerButtons = styled.div`
  display: flex;
  flex-direction: column;
  gap: 1px;
`;

const LayerInfo = styled.div`
  flex: 1;
  padding: 0 1px 0 2px;
  font-size: 12px;

  > span {
    display: block;
    height: 21px;
    padding-left: 2px;
    line-height: 21px;
  }
`;

const ColorSelect = styled.span`
  display: flex;
  align-items: center;
  justify-content: space-between;
  flex: 1;
  height: 18px;
  margin-left: -4px;
  padding: 0 3px 0 1px;
  border: 1px solid #525357;
  border-radius: 3px;
  background: #4a4a4c;
  color: #909090;

  select {
    appearance: none;
    width: 100px;
    height: 15px;
    padding: 0;
    border: 0;
    background: linear-gradient(90deg, #2a2a2a, #8e8e8e);
    color: #b8b8b8;
    font-size: 12px;
    line-height: 15px;
    text-align: center;
    text-align-last: center;
    text-shadow: 0 0 2px #000, 0 0 2px #000;
  }
`;

const StatusBar = styled.footer`
  display: grid;
  grid-template-columns: 1fr auto 1fr;
  align-items: center;
  height: 26px;
  flex: none;
  padding-left: 2px;
  border-top: 1px solid #222;
  background: #333;
`;

const Transport = styled.div`
  display: flex;
  align-items: center;
  gap: 4px;

  ${Divider} { margin: 0; }
`;

const TransportButtons = styled.div`
  display: flex;
  overflow: hidden;
  border-radius: 3px;
  gap: 1px;

  button {
    ${plainButton}
    width: 28px;
    height: 19px;
    background: #b0b0b0;
    color: #000;
  }
`;

const TimeInput = styled.input`
  width: 84px;
  height: 20px;
  padding: 0 6px;
  border: 0;
  border-radius: 4px;
  background: #1e1e1e;
  font-size: 11px;
`;

const Meter = styled.div`
  display: flex;
  justify-content: space-between;
  width: 142px;
  height: 18px;
  padding: 0 2px;
  background: #000;
  color: #a8a8a8;
  font-size: 9px;
  line-height: 18px;

  span {
    background: linear-gradient(#888, #888) center bottom / 1px 2px no-repeat;
  }
`;

const MenuBox = styled.div`
  position: absolute;
  left: 921px;
  top: 230px;
  width: 290px;
  padding: 3px 0;
  border: 1px solid #808080;
  border-radius: 6px;
  background: #333;
  box-shadow: 1px 2px 4px rgba(0, 0, 0, 0.5);
`;

const MenuGroup = styled.div`
  & + &::before {
    content: '';
    display: block;
    height: 2px;
    margin: 0 12px;
    border-top: 1px solid #606060;
  }
`;

const MenuItem = styled.button`
  ${plainButton}
  display: grid;
  grid-template-columns: 20px 179px 1fr;
  justify-items: start;
  width: 100%;
  height: 22px;
  padding-left: 6px;
  text-align: left;
  white-space: nowrap;

  u { text-underline-offset: 2px; }
`;
